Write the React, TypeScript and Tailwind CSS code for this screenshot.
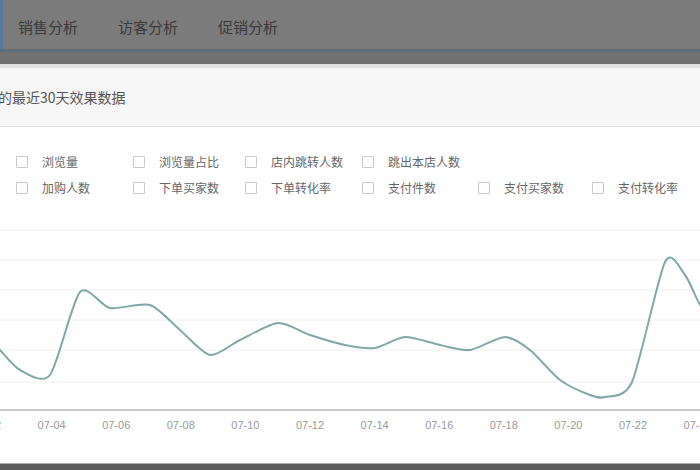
import React from "react";

const row1 = ["浏览量", "浏览量占比", "店内跳转人数", "跳出本店人数"];
const row2 = ["加购人数", "下单买家数", "下单转化率", "支付件数", "支付买家数", "支付转化率"];
const cols = [16, 133, 245, 362, 478, 592];

const pts: [number, number][] = [[-5,345],[0,350],[20,370],[50,375],[80,292],[110,308],[150,305],[180,330],[210,355],[240,340],[278,323],[310,335],[345,345],[375,348],[405,337],[440,345],[470,350],[505,337],[530,350],[560,380],[590,395],[605,397],[632,382],[665,262],[685,275],[700,305],[710,312]];

function smooth(p: [number, number][]) {
  let d = `M${p[0][0]},${p[0][1]}`;
  for (let i = 0; i < p.length - 1; i++) {
    const p0 = p[i - 1] || p[i], p1 = p[i], p2 = p[i + 1], p3 = p[i + 2] || p2;
    const c1x = p1[0] + (p2[0] - p0[0]) / 8, c1y = p1[1] + (p2[1] - p0[1]) / 8;
    const c2x = p2[0] - (p3[0] - p1[0]) / 8, c2y = p2[1] - (p3[1] - p1[1]) / 8;
    d += ` C${c1x},${c1y} ${c2x},${c2y} ${p2[0]},${p2[1]}`;
  }
  return d;
}

function Row({ items }: { items: string[] }) {
  return (
    <div className="relative h-[26px]">
      {items.map((t, i) => (
        <div key={t} className="absolute top-0 flex items-center gap-[14px]" style={{ left: cols[i] }}>
          <span className="w-[12px] h-[12px] border border-[#c8c8c8] bg-white rounded-[1px]" />
          <span className="text-[12px] text-[#666]">{t}</span>
        </div>
      ))}
    </div>
  );
}

export default function App() {
  const labels = ["07-02","07-04","07-06","07-08","07-10","07-12","07-14","07-16","07-18","07-20","07-22","07-24"];
  return (
    <div className="w-[700px] h-[470px] overflow-hidden bg-white flex flex-col" style={{ fontFamily: '"Noto Sans CJK SC", "Liberation Sans", sans-serif' }}>
      <div className="h-[49px] bg-[#7b7b7b] flex items-center border-l-[3px] border-[#5a7a99]">
        <div className="flex gap-[40px] pl-[15px] text-[15px] text-[#3a3a3a] pt-[6px]">
          <span>销售分析</span><span>访客分析</span><span>促销分析</span>
        </div>
      </div>
      <div className="h-[3px] bg-[#5d6e7c]" />
      <div className="h-[12px] bg-[#727272]" />
      <div className="h-[4px] bg-[#e0e0e0]" />
      <div className="h-[59px] bg-[#f7f7f8] border-b border-[#e3e3e3] flex items-center text-[14px] text-[#555]">
        <span className="-ml-[2px]">的最近30天效果数据</span>
      </div>
      <div className="pt-[26px] flex flex-col">
        <Row items={row1} />
        <Row items={row2} />
      </div>
      <svg width="700" height="240" viewBox="0 210 700 240" className="block mt-[5px]">
        {[230, 260, 290, 320, 350, 382].map((y) => (
          <line key={y} x1="0" x2="700" y1={y} y2={y} stroke="#f0f0f0" strokeWidth="1" />
        ))}
        <line x1="0" x2="700" y1="410" y2="410" stroke="#c9c9c9" strokeWidth="2" />
        <path d={smooth(pts)} fill="none" stroke="#7fa8a6" strokeWidth="2" />
        {labels.map((l, i) => (
          <text key={l} x={-13 + i * 64.6} y="429" textAnchor="middle" fontSize="11" fill="#999" fontFamily="Liberation Sans, sans-serif">{l}</text>
        ))}
      </svg>
      <div className="flex-1" />
      <div className="h-[7px] bg-[#5a5a5a] border-t border-[#aaa]" />
    </div>
  );
}
